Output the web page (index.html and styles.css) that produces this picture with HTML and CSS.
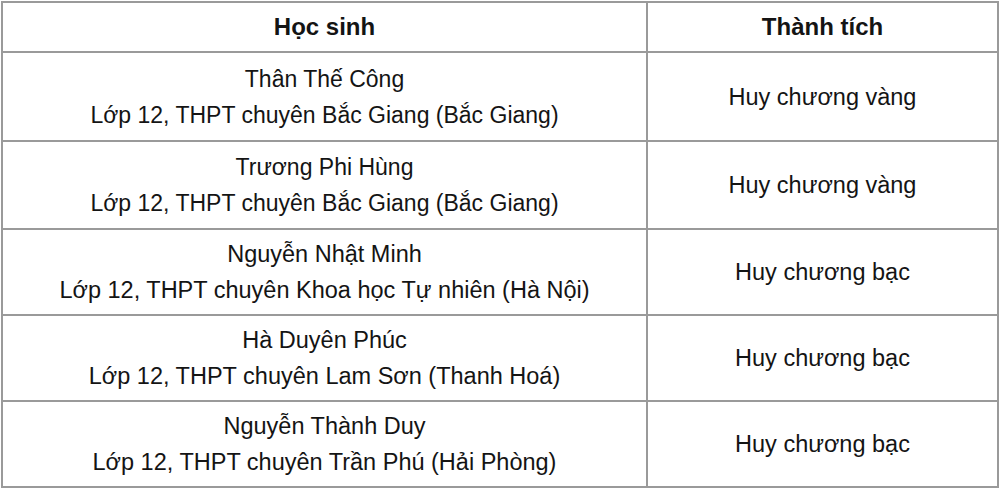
FILE: index.html
```html
<!DOCTYPE html>
<html lang="vi">
<head>
<meta charset="utf-8">
<link rel="stylesheet" href="styles.css">
</head>
<body>
<table class="results">
  <thead>
    <tr class="head-row">
      <th class="col-student">Học sinh</th>
      <th class="col-award">Thành tích</th>
    </tr>
  </thead>
  <tbody>
    <tr class="row-a">
      <td>Thân Thế Công<br>Lớp 12, THPT chuyên Bắc Giang (Bắc Giang)</td>
      <td class="award">Huy chương vàng</td>
    </tr>
    <tr class="row-b">
      <td>Trương Phi Hùng<br>Lớp 12, THPT chuyên Bắc Giang (Bắc Giang)</td>
      <td class="award">Huy chương vàng</td>
    </tr>
    <tr class="row-c">
      <td>Nguyễn Nhật Minh<br>Lớp 12, THPT chuyên Khoa học Tự nhiên (Hà Nội)</td>
      <td class="award">Huy chương bạc</td>
    </tr>
    <tr class="row-c">
      <td>Hà Duyên Phúc<br>Lớp 12, THPT chuyên Lam Sơn (Thanh Hoá)</td>
      <td class="award">Huy chương bạc</td>
    </tr>
    <tr class="row-c">
      <td>Nguyễn Thành Duy<br>Lớp 12, THPT chuyên Trần Phú (Hải Phòng)</td>
      <td class="award">Huy chương bạc</td>
    </tr>
  </tbody>
</table>
</body>
</html>
```

FILE: styles.css
```css
html, body {
  margin: 0;
  padding: 0;
  background: #ffffff;
}
body {
  padding: 1px;
  font-family: "Liberation Sans", Arial, sans-serif;
  color: #141414;
}
.results {
  width: 998px;
  border-collapse: collapse;
  table-layout: fixed;
}
.results th,
.results td {
  border: 2px solid #9a9a9a;
  text-align: center;
  vertical-align: middle;
  padding: 0;
  font-size: 23px;
  line-height: 36px;
}
.results th {
  font-weight: bold;
  font-size: 24px;
}
.results .row-c td {
  font-size: 23.5px;
}
.results .award {
  font-size: 23.5px;
}
.col-student { width: 643px; }
.head-row { height: 50px; }
.row-a { height: 89px; }
.row-b { height: 88px; }
.row-c { height: 86px; }
```
